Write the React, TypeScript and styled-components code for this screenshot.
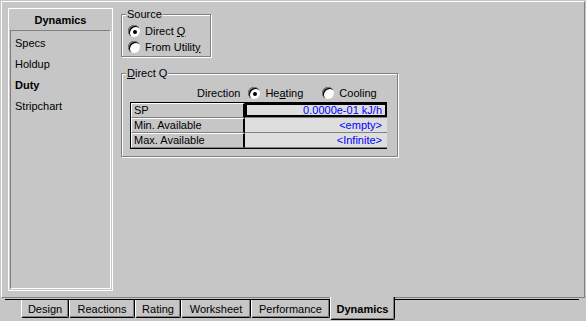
import styled, { createGlobalStyle } from "styled-components";

const face = '#c6c6c6';

const GlobalStyle = createGlobalStyle`
  html, body {
    margin: 0;
    padding: 0;
    background: ${face};
  }
  body {
    font-family: "Liberation Sans", Arial, sans-serif;
    font-size: 11px;
    color: #000;
  }
`;

const navItems = [
  { label: 'Specs' },
  { label: 'Holdup' },
  { label: 'Duty', active: true },
  { label: 'Stripchart' },
];

const tabs = [
  { label: 'Design', width: 48 },
  { label: 'Reactions', width: 66 },
  { label: 'Rating', width: 46 },
  { label: 'Worksheet', width: 70 },
  { label: 'Performance', width: 79 },
  { label: 'Dynamics', width: 65, active: true },
];

const dutyRows = [
  { label: 'SP', value: '0.0000e-01 kJ/h', focused: true },
  { label: 'Min. Available', value: '<empty>' },
  { label: 'Max. Available', value: '<Infinite>' },
];

const App = () => {
  return (
    <>
      <GlobalStyle />
      <Screen>
        <Page>
          <NavBox>
            <NavHeader>Dynamics</NavHeader>
            <NavList>
              {navItems.map(item => (
                <NavItem key={item.label} $active={item.active}>{item.label}</NavItem>
              ))}
            </NavList>
          </NavBox>

          <Content>
            <SourceGroup>
              <Legend>Source</Legend>
              <RadioRow>
                <Radio $checked />
                <span>Direct <u>Q</u></span>
              </RadioRow>
              <RadioRow>
                <Radio />
                <span>From Utilit<u>y</u></span>
              </RadioRow>
            </SourceGroup>

            <DutyGroup>
              <Legend><u>D</u>irect Q</Legend>
              <DirectionRow>
                <span>Direction</span>
                <RadioRow>
                  <Radio $checked />
                  <span>He<u>a</u>ting</span>
                </RadioRow>
                <RadioRow>
                  <Radio />
                  <span>Cooling</span>
                </RadioRow>
              </DirectionRow>
              <DutyTable>
                {dutyRows.map(row => (
                  <DutyRow key={row.label}>
                    <LabelCell>{row.label}</LabelCell>
                    <ValueCell $focused={row.focused}>{row.value}</ValueCell>
                  </DutyRow>
                ))}
              </DutyTable>
            </DutyGroup>
          </Content>
        </Page>

        <TabBar>
          {tabs.map(tab => (
            <Tab key={tab.label} $width={tab.width} $active={tab.active}>{tab.label}</Tab>
          ))}
        </TabBar>
      </Screen>
    </>
  );
};

const Screen = styled.div`
  width: 586px;
  height: 321px;
  box-sizing: border-box;
  padding: 1px 1px 0 1px;
  display: flex;
  flex-direction: column;
  background: ${face};
  overflow: hidden;
`;

const Page = styled.div`
  box-sizing: border-box;
  height: 297px;
  display: flex;
  padding: 6px 0 0 6px;
  border-top: 1px solid #fff;
  border-left: 1px solid #fff;
  border-right: 1px solid #808080;
  border-bottom: 1px solid #808080;
`;

const NavBox = styled.div`
  box-sizing: border-box;
  width: 105px;
  height: 283px;
  border: 1px solid #fff;
  display: flex;
  flex-direction: column;
`;

const NavHeader = styled.div`
  height: 21px;
  padding-top: 1px;
  box-sizing: border-box;
  display: flex;
  align-items: center;
  justify-content: center;
  font-weight: bold;
`;

const NavList = styled.div`
  flex: 1;
  margin: 0 1px 1px 1px;
  padding-top: 2px;
  border-top: 1px solid #808080;
  border-left: 1px solid #808080;
  border-bottom: 1px solid #fff;
  border-right: 1px solid #fff;
`;

const NavItem = styled.div<{ $active?: boolean }>`
  height: 21px;
  line-height: 21px;
  padding-left: 4px;
  font-weight: ${props => props.$active ? 'bold' : 'normal'};
`;

const Content = styled.div`
  margin-left: 8px;
  padding-top: 6px;
  display: flex;
  flex-direction: column;
  align-items: flex-start;
`;

const GroupBox = styled.div`
  position: relative;
  box-sizing: border-box;
  border: 1px solid #808080;
  box-shadow: 1px 1px 0 #fff, inset 1px 1px 0 #fff;
`;

const SourceGroup = styled(GroupBox)`
  width: 90px;
  height: 43px;
  padding: 8px 0 0 6px;
`;

const DutyGroup = styled(GroupBox)`
  width: 277px;
  height: 84px;
  margin-top: 16px;
  padding: 11px 0 0 8px;
`;

const Legend = styled.span`
  position: absolute;
  top: -8px;
  left: 4px;
  padding: 0 1px;
  line-height: 14px;
  background: ${face};
`;

const RadioRow = styled.label`
  display: flex;
  align-items: center;
  height: 16px;
  gap: 5px;
`;

const Radio = styled.span<{ $checked?: boolean }>`
  width: 12px;
  height: 12px;
  box-sizing: border-box;
  border-radius: 50%;
  background: #fff;
  box-shadow: inset 1px 1px 0 #808080, inset 2px 2px 0 #000;
  display: flex;
  align-items: center;
  justify-content: center;
  flex-shrink: 0;

  &::after {
    content: '';
    width: 4px;
    height: 4px;
    margin: 1px 0 0 1px;
    border-radius: 50%;
    background: ${props => props.$checked ? '#000' : 'transparent'};
  }
`;

const DirectionRow = styled.div`
  display: flex;
  align-items: center;
  height: 16px;
  margin-left: 67px;

  & > span:first-child {
    margin-right: 8px;
  }
  & > label + label {
    margin-left: 19px;
  }
`;

const DutyTable = styled.div`
  width: 256px;
  margin-top: 1px;
  border-top: 1px solid #000;
  border-left: 1px solid #000;
  border-bottom: 1px solid #000;
`;

const DutyRow = styled.div`
  display: grid;
  grid-template-columns: 114px 1fr;
  height: 15px;
`;

const LabelCell = styled.div`
  box-sizing: border-box;
  background: ${face};
  border-top: 1px solid #fff;
  border-left: 1px solid #fff;
  border-bottom: 1px solid #808080;
  border-right: 2px solid #000;
  padding-left: 2px;
  line-height: 13px;
  white-space: nowrap;
`;

const ValueCell = styled.div<{ $focused?: boolean }>`
  box-sizing: border-box;
  background: #dedede;
  color: #0000ff;
  text-align: right;
  padding-right: 5px;
  line-height: 14px;
  border-bottom: 1px solid #808080;
  box-shadow: ${props => props.$focused ? 'inset 0 0 0 2px #000' : 'none'};
  white-space: nowrap;
`;

const TabBar = styled.div`
  display: flex;
  align-items: flex-start;
  margin: 1px 6px 0 4px;
  padding-left: 16px;
  border-top: 1px solid #000;
  flex: 1;
`;

const Tab = styled.div<{ $width: number; $active?: boolean }>`
  box-sizing: border-box;
  width: ${props => props.$width}px;
  height: ${props => props.$active ? 23 : 18}px;
  margin-top: ${props => props.$active ? -3 : 0}px;
  position: relative;
  display: flex;
  align-items: center;
  justify-content: center;
  padding-top: ${props => props.$active ? 2 : 0}px;
  font-weight: ${props => props.$active ? 'bold' : 'normal'};
  background: ${face};
  border-left: 1px solid #fff;
  border-right: 1px solid #000;
  border-bottom: 1px solid #000;
  border-bottom-left-radius: 2px;
  border-bottom-right-radius: 2px;
  box-shadow: inset -1px -1px 0 #808080;
  white-space: nowrap;
`;

export default App;
